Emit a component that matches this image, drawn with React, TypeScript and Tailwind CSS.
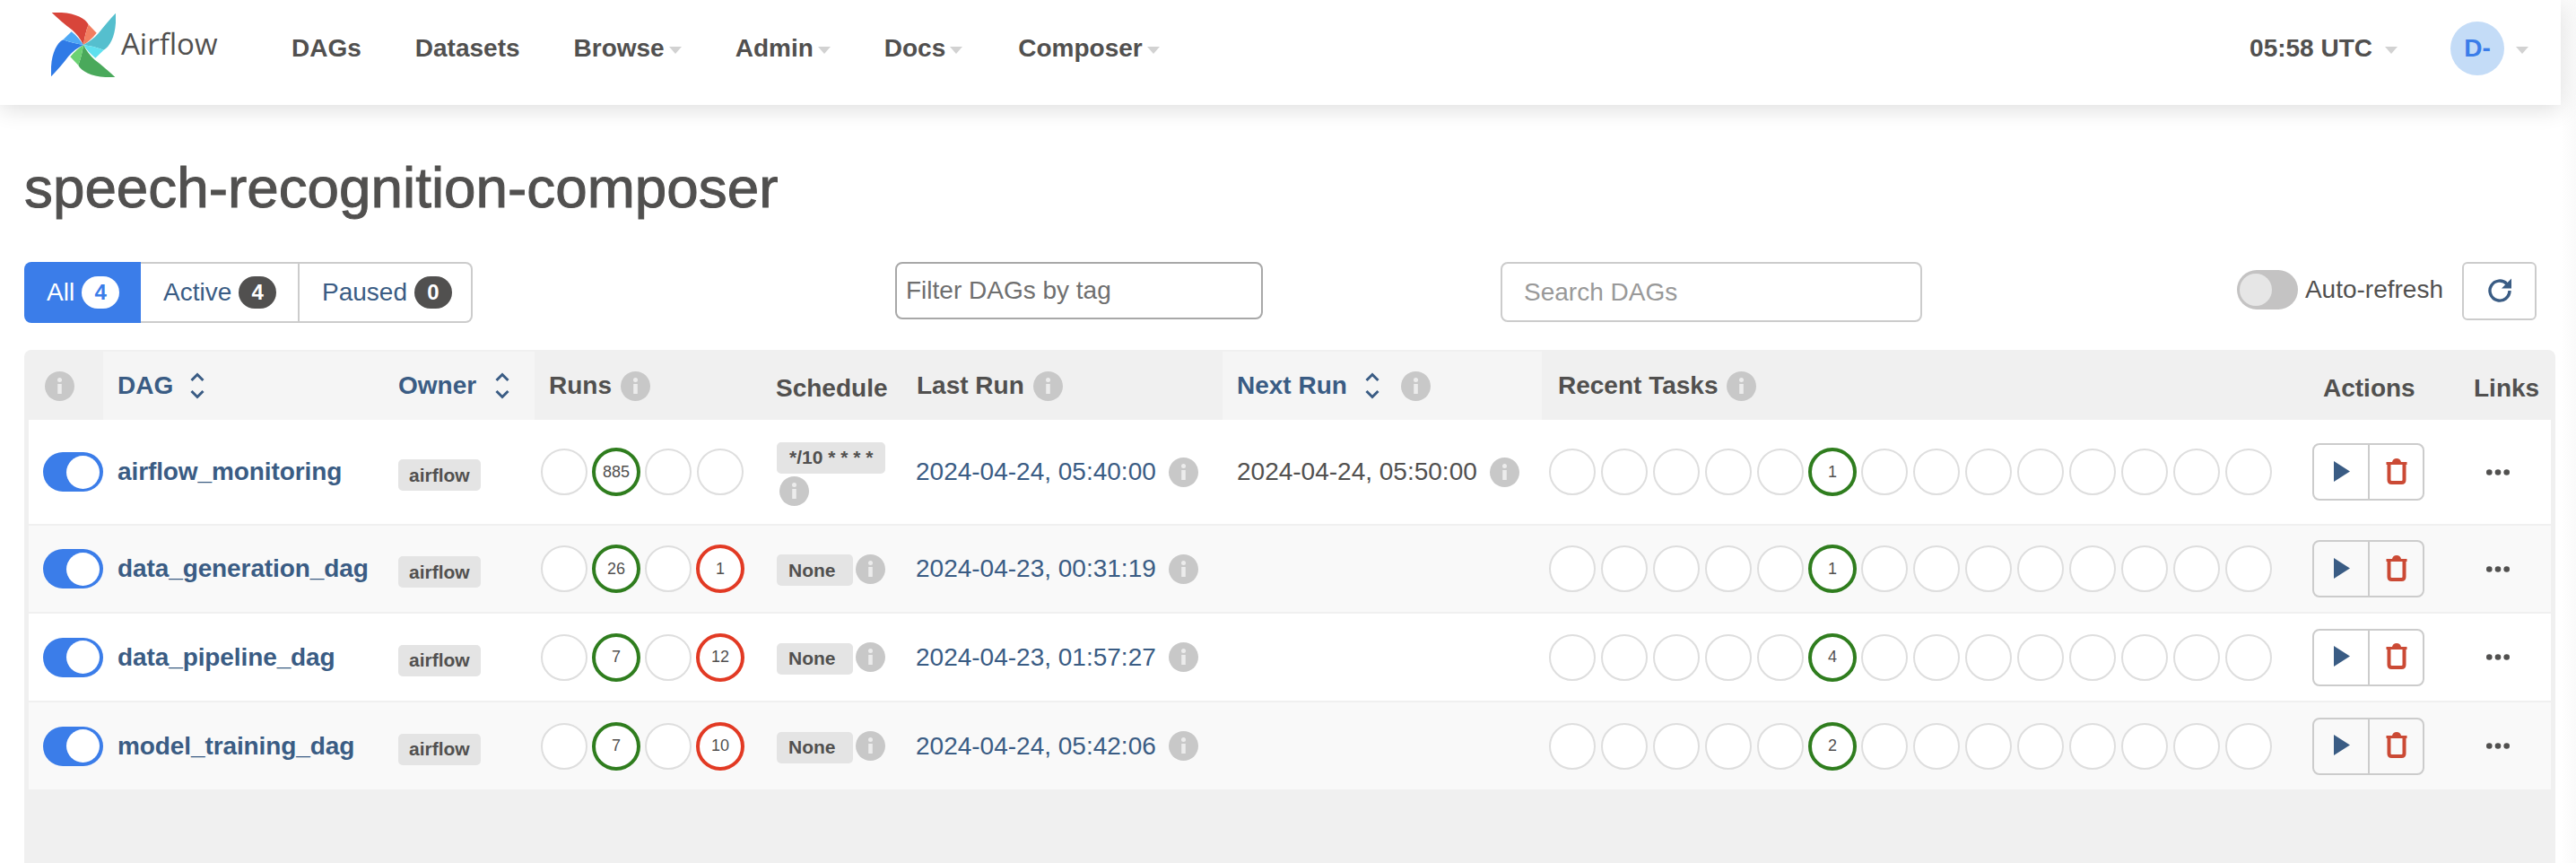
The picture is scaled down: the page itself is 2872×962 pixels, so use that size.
import React from 'react'

const GRID =
  'grid grid-cols-[83px_313px_168px_254px_156px_357px_356px_849px_174px_102px]'

const rows = [
  {
    name: 'airflow_monitoring',
    runs: [null, 885, null, null],
    schedule: '*/10 * * * *',
    last: '2024-04-24, 05:40:00',
    next: '2024-04-24, 05:50:00',
    tasks: 1,
    height: 'h-[116px]',
    bg: 'bg-white',
  },
  {
    name: 'data_generation_dag',
    runs: [null, 26, null, 1],
    schedule: 'None',
    last: '2024-04-23, 00:31:19',
    next: '',
    tasks: 1,
    height: 'h-[98px] border-t-2 border-[#f0f0f0]',
    bg: 'bg-[#f9f9f9]',
  },
  {
    name: 'data_pipeline_dag',
    runs: [null, 7, null, 12],
    schedule: 'None',
    last: '2024-04-23, 01:57:27',
    next: '',
    tasks: 4,
    height: 'h-[99px] border-t-2 border-[#f0f0f0]',
    bg: 'bg-white',
  },
  {
    name: 'model_training_dag',
    runs: [null, 7, null, 10],
    schedule: 'None',
    last: '2024-04-24, 05:42:06',
    next: '',
    tasks: 2,
    height: 'h-[99px] border-t-2 border-[#f0f0f0]',
    bg: 'bg-[#f9f9f9]',
  },
]

const Caret = () => (
  <span className="inline-block w-0 h-0 border-x-[7px] border-x-transparent border-t-[8px] border-t-[#d2d2d2]" />
)

const Info = () => (
  <svg width="33" height="33" viewBox="0 0 33 33" className="shrink-0">
    <circle cx="16.5" cy="16.5" r="16.5" fill="#c8c8c8" />
    <circle cx="16.5" cy="9.5" r="2.5" fill="#ececec" />
    <rect x="14.2" y="14" width="4.6" height="11" fill="#ececec" />
  </svg>
)

const Sort = () => (
  <svg width="16" height="30" viewBox="0 0 16 30" fill="none" stroke="#3a5c84" strokeWidth="3" className="shrink-0">
    <polyline points="1.5,9 8,2.5 14.5,9" />
    <polyline points="1.5,21 8,27.5 14.5,21" />
  </svg>
)

const Logo = () => {
  const blades = [
    { dark: '#d8453a', light: '#f27e60', rot: 0 },
    { dark: '#55bfce', light: '#5fe0ee', rot: 90 },
    { dark: '#4aa95b', light: '#6bd173', rot: 180 },
    { dark: '#2f7ae6', light: '#4fa9f5', rot: 270 },
  ]
  return (
    <svg width="72" height="72" viewBox="-108 -108 216 216" className="shrink-0">
      {blades.map((b) => (
        <g key={b.rot} transform={`rotate(${b.rot})`}>
          <path d="M-106,-108 C-40,-112 5,-92 17,-68 C8,-45 3,-20 0,0 C-10,-20 -22,-36 -38,-50 C-62,-68 -85,-88 -106,-108 Z" fill={b.dark} />
          <path d="M17,-68 L44,-40 C30,-22 15,-10 0,0 C3,-20 8,-45 17,-68 Z" fill={b.light} />
        </g>
      ))}
    </svg>
  )
}

const Circle = ({ count, color }: { count: number | null; color: string }) => {
  if (count === null) {
    return <div className="w-[52px] h-[52px] rounded-full border-2 border-[#dedede] bg-white shrink-0" />
  }
  return (
    <div
      className={`w-[54px] h-[54px] -mx-px rounded-full border-[4px] bg-white flex items-center justify-center text-[18px] text-[#51504f] shrink-0 ${color}`}
    >
      {count}
    </div>
  )
}

const NavItem = ({ label, caret, gap = 'mr-[60px]' }: { label: string; caret?: boolean; gap?: string }) => (
  <div className={`flex items-center ${gap}`}>
    <span className="font-bold">{label}</span>
    {caret && (
      <span className="ml-[5px] mt-[4px] flex">
        <Caret />
      </span>
    )}
  </div>
)

const Tab = ({ label, count, width, active, last }: { label: string; count: number; width: string; active?: boolean; last?: boolean }) => (
  <div
    className={`h-full flex items-center gap-[8px] pl-[25px] ${width} ${
      active ? 'bg-[#3b7de9] text-white rounded-l-[8px]' : 'text-[#3a5c84] border-y-2 border-[#cccccc]'
    } ${!active && last ? 'border-r-2 rounded-r-[8px]' : ''} ${!active && !last ? 'border-r-2' : ''}`}
  >
    <span>{label}</span>
    <span
      className={`w-[42px] h-[36px] rounded-full flex items-center justify-center font-bold text-[24px] ${
        active ? 'bg-white text-[#3b7de9]' : 'bg-[#51504f] text-white'
      }`}
    >
      {count}
    </span>
  </div>
)

const Badge = ({ children, className }: { children: React.ReactNode; className: string }) => (
  <span className={`h-[35px] flex items-center rounded-[5px] bg-[#e4e4e4] text-[21px] font-bold text-[#51504f] ${className}`}>
    {children}
  </span>
)

export default function App() {
  return (
    <div className="h-[962px] overflow-hidden flex bg-white text-[28px] text-[#51504f] font-['Liberation_Sans',Arial,sans-serif]">
      <div className="flex-1 flex flex-col min-w-0">
        <nav className="relative z-10 h-[117px] shrink-0 bg-white flex items-start shadow-[0_4px_24px_rgba(0,0,0,0.14)]">
          <div className="flex items-center pl-[57px] pt-[14px] w-[325px] shrink-0">
            <Logo />
            <span className="ml-[6px] -mt-[2px] text-[33px] text-[#51504f] font-['Open_Sans',sans-serif]">Airflow</span>
          </div>
          <div className="flex items-center h-[108px] flex-1">
            <NavItem label="DAGs" />
            <NavItem label="Datasets" />
            <NavItem label="Browse" caret />
            <NavItem label="Admin" caret />
            <NavItem label="Docs" caret gap="mr-[62px]" />
            <NavItem label="Composer" caret />
            <div className="ml-auto flex items-center">
              <span className="font-bold">05:58 UTC</span>
              <span className="ml-[14px] mt-[4px] flex">
                <Caret />
              </span>
              <div className="ml-[59px] w-[60px] h-[60px] rounded-full bg-[#c4dcf7] text-[#3b7de9] font-bold flex items-center justify-center">
                D-
              </div>
              <span className="ml-[13px] mr-[36px] mt-[4px] flex">
                <Caret />
              </span>
            </div>
          </div>
        </nav>

        <main className="flex-1 flex flex-col pl-[27px] pr-[6px] min-h-0">
          <h1 className="mt-[52px] h-[80px] leading-[80px] text-[63.8px] text-[#51504f] [-webkit-text-stroke:1px_#51504f]">
            speech-recognition-composer
          </h1>

          <div className="mt-[43px] h-[68px] flex items-start pr-[21px]">
            <div className="h-[68px] flex">
              <Tab label="All" count={4} width="w-[130px]" active />
              <Tab label="Active" count={4} width="w-[177px]" />
              <Tab label="Paused" count={0} width="w-[193px]" last />
            </div>
            <input
              placeholder="Filter DAGs by tag"
              className="ml-[471px] w-[410px] h-[64px] px-[10px] border-2 border-[#a8a8a8] rounded-[8px] placeholder:text-[#6f6f6f] outline-none"
            />
            <input
              placeholder="Search DAGs"
              className="ml-[265px] w-[470px] h-[67px] px-[24px] border-2 border-[#cccccc] rounded-[8px] placeholder:text-[#999999] outline-none"
            />
            <div className="ml-auto flex items-center h-[65px]">
              <div className="w-[68px] h-[44px] rounded-full bg-[#c4c3c3] flex items-center pl-[3px] -mt-[3px]">
                <div className="w-[36px] h-[36px] rounded-full bg-[#e6e6e6]" />
              </div>
              <span className="ml-[8px] -mt-[3px]">Auto-refresh</span>
              <div className="ml-[21px] w-[83px] h-[65px] border-2 border-[#cccccc] rounded-[6px] flex items-center justify-center">
                <svg width="28" height="28" viewBox="0 0 28 28" fill="none" className="-mt-[4px]">
                  <path d="M22,7.5 A11,11 0 1 0 25,15" stroke="#3a5c84" strokeWidth="3.4" />
                  <path d="M27,1.5 V12.5 H16 Z" fill="#3a5c84" />
                </svg>
              </div>
            </div>
          </div>

          <div className="mt-[30px] flex-1 bg-[#f0f0f0] rounded-t-[8px] px-[5px] pt-[2px]">
            <div className={`${GRID} h-[76px] font-bold`}>
              <div className="flex items-center pl-[18px]">
                <Info />
              </div>
              <div className="flex items-center pl-[16px] gap-[19px] bg-[#f5f5f5] text-[#3a5c84]">
                DAG
                <Sort />
              </div>
              <div className="flex items-center pl-[16px] gap-[21px] bg-[#f5f5f5] text-[#3a5c84]">
                Owner
                <Sort />
              </div>
              <div className="flex items-center pl-[16px] gap-[10px]">
                Runs
                <Info />
              </div>
              <div className="flex items-center pl-[15px] pt-[6px]">Schedule</div>
              <div className="flex items-center pl-[16px] gap-[10px]">
                Last Run
                <Info />
              </div>
              <div className="flex items-center pl-[16px] gap-[20px] bg-[#f5f5f5] text-[#3a5c84]">
                Next Run
                <Sort />
                <span className="ml-[4px]">
                  <Info />
                </span>
              </div>
              <div className="flex items-center pl-[18px] gap-[10px]">
                Recent Tasks
                <Info />
              </div>
              <div className="flex items-center pl-[22px] pt-[6px]">Actions</div>
              <div className="flex items-center pl-[16px] pt-[6px]">Links</div>
            </div>

            {rows.map((r) => (
              <div key={r.name} className={`${GRID} ${r.height} ${r.bg}`}>
                <div className="flex items-center pl-[16px]">
                  <div className="w-[67px] h-[44px] rounded-full bg-[#3b7de9] flex items-center justify-end pr-[4px]">
                    <div className="w-[37px] h-[37px] rounded-full bg-white" />
                  </div>
                </div>
                <div className="flex items-center pl-[16px] font-bold text-[#3a5c84] tracking-[-0.1px]">{r.name}</div>
                <div className="flex items-center pl-[16px] pt-[7px]">
                  <Badge className="px-[12px]">airflow</Badge>
                </div>
                <div className="flex items-center pl-[7px] gap-[6px]">
                  {r.runs.map((n, i) => (
                    <Circle key={i} count={n} color={i === 3 ? 'border-[#e23a24]' : 'border-[#2f7d1e]'} />
                  ))}
                </div>
                {r.schedule === 'None' ? (
                  <div className="flex items-center pl-[16px] gap-[3px]">
                    <Badge className="pl-[13px] pr-[19px] mt-[3px]">None</Badge>
                    <Info />
                  </div>
                ) : (
                  <div className="flex flex-col items-start justify-center pl-[16px] gap-[3px] pt-[4px]">
                    <Badge className="px-[14px]">{r.schedule}</Badge>
                    <span className="ml-[3px]">
                      <Info />
                    </span>
                  </div>
                )}
                <div className="flex items-center pl-[15px] gap-[14px] text-[#3a5c84]">
                  {r.last}
                  <Info />
                </div>
                <div className="flex items-center pl-[16px] gap-[14px]">
                  {r.next && (
                    <>
                      {r.next}
                      <Info />
                    </>
                  )}
                </div>
                <div className="flex items-center pl-[8px] gap-[6px]">
                  {Array.from({ length: 14 }).map((_, i) => (
                    <Circle key={i} count={i === 5 ? r.tasks : null} color="border-[#2f7d1e]" />
                  ))}
                </div>
                <div className="flex items-center pl-[10px]">
                  <div className="w-[125px] h-[64px] border-2 border-[#cccccc] rounded-[8px] flex">
                    <div className="w-[62px] border-r-2 border-[#cccccc] flex items-center justify-center">
                      <svg width="18" height="23" viewBox="0 0 18 23" className="ml-[2px] -mt-[2px]">
                        <path d="M0,0 L18,11.5 L0,23 Z" fill="#3a5c84" />
                      </svg>
                    </div>
                    <div className="flex-1 flex items-center justify-center">
                      <svg width="24" height="31" viewBox="0 0 24 31" fill="none" className="-mt-[4px]">
                        <path d="M0.5,6 H23.5 V9 H0.5 Z M7,6 Q8,2 12,2 Q16,2 17,6 Z" fill="#cb4a35" />
                        <path d="M3.5,9 V26 Q3.5,29 6.5,29 H17.5 Q20.5,29 20.5,26 V9" stroke="#cb4a35" strokeWidth="4" />
                      </svg>
                    </div>
                  </div>
                </div>
                <div className="flex items-center pl-[30px]">
                  <svg width="26" height="7" viewBox="0 0 26 7">
                    <circle cx="3.3" cy="3.5" r="3.3" fill="#51504f" />
                    <circle cx="13" cy="3.5" r="3.3" fill="#51504f" />
                    <circle cx="22.7" cy="3.5" r="3.3" fill="#51504f" />
                  </svg>
                </div>
              </div>
            ))}
          </div>
        </main>
      </div>
      <div className="w-[17px] shrink-0 bg-gradient-to-r from-white to-[#fafafa]" />
    </div>
  )
}
